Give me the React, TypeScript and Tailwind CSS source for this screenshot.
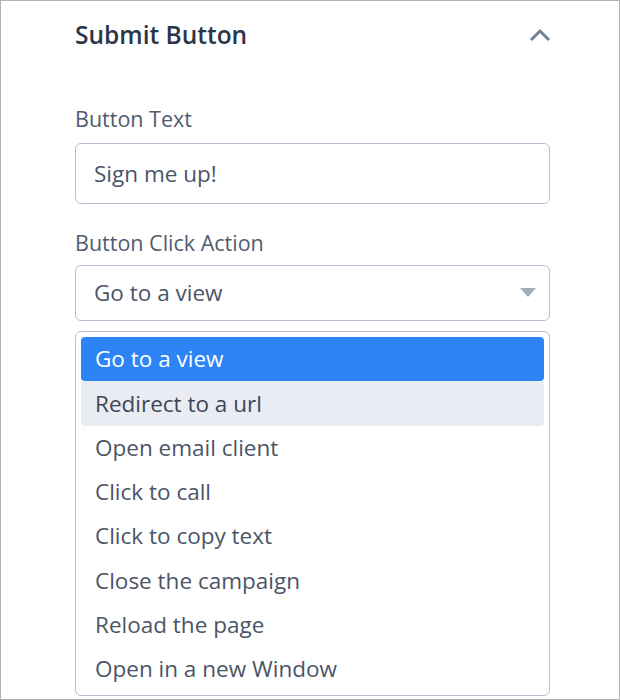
const options = [
    "Go to a view",
    "Redirect to a url",
    "Open email client",
    "Click to call",
    "Click to copy text",
    "Close the campaign",
    "Reload the page",
    "Open in a new Window",
];

const font = { fontFamily: '"Open Sans", "Liberation Sans", sans-serif' };

export default function App() {
    const selected = "Go to a view";
    const hovered = "Redirect to a url";

    return (
        <div
            className="w-[620px] h-[700px] border border-[#b3b3b3] bg-white overflow-hidden"
            style={font}
        >
            <div className="pl-[74px] pr-[69px]">
                {/* Section header */}
                <div className="h-[68px] flex items-center justify-between">
                    <h2 className="text-[24.5px] leading-[30px] font-semibold text-[#2b3648]">
                        Submit Button
                    </h2>
                    <svg width="22" height="14" viewBox="0 0 22 14" className="mr-[-1px]">
                        <path
                            d="M2 12 L11 3 L20 12"
                            fill="none"
                            stroke="#718096"
                            strokeWidth="3"
                        />
                    </svg>
                </div>

                {/* Button text */}
                <label className="block mt-[39px] text-[21.5px] leading-[22px] text-[#505c6e]">
                    Button Text
                </label>
                <div className="mt-[13px] h-[61px] border-[1.5px] border-[#b7c0d3] rounded-[6px] flex items-center pl-[18px] text-[22.5px] text-[#4a5568]">
                    Sign me up!
                </div>

                {/* Click action */}
                <label className="block mt-[28px] text-[21.5px] leading-[22px] text-[#505c6e]">
                    Button Click Action
                </label>
                <div className="mt-[11px] h-[56px] border-[1.5px] border-[#b7c0d3] rounded-[6px] flex items-center justify-between pl-[18px] pr-[13px] text-[22.5px] text-[#4a5568]">
                    <span>{selected}</span>
                    <svg width="16" height="10" viewBox="0 0 16 10">
                        <path d="M0 0 H16 L8 9 Z" fill="#a3adbd" />
                    </svg>
                </div>

                {/* Options list */}
                <ul className="mt-[10px] border-[1.5px] border-[#b7c0d3] rounded-[6px] p-[5px] pb-[4px]">
                    {options.map((opt) => (
                        <li
                            key={opt}
                            className={`h-[44.25px] flex items-center pl-[14px] rounded-[4px] text-[22.5px] ${
                                opt === selected
                                    ? "bg-[#2c84f7] text-white"
                                    : opt === hovered
                                      ? "bg-[#e9ecf3] text-[#3d4757]"
                                      : "text-[#4a5568]"
                            }`}
                        >
                            {opt}
                        </li>
                    ))}
                </ul>
            </div>
        </div>
    );
}
